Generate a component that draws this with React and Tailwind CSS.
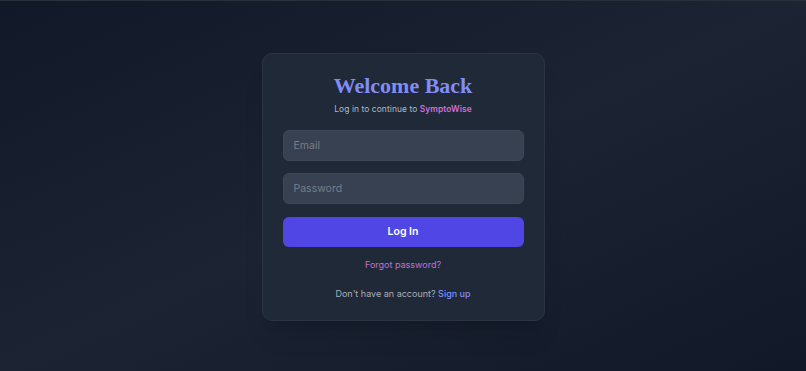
export default function App() {
  return (
    <div className="h-[371px] w-full bg-gradient-to-br from-[#111827] via-[#1c2434] to-[#111827] flex items-center justify-center border-t border-[#2a303a]" style={{ fontFamily: "Inter, 'Noto Sans', sans-serif" }}>
      <div className="w-[283px] h-[268px] mt-[2px] rounded-[10px] bg-[#1f2937] border border-[#2a3442] shadow-xl px-[20px] pt-[19px] flex flex-col">
        <h1 className="text-center text-[22px] leading-[26px] font-bold text-[#818cf8]" style={{ fontFamily: "'Liberation Serif', serif" }}>Welcome Back</h1>
        <p className="text-center text-[8.4px] leading-[14px] mt-[3px] text-[#b4bac4] tracking-[0.1px]">
          Log in to continue to <span className="font-semibold text-[#d16fdc]">SymptoWise</span>
        </p>
        <div className="mt-[14px] h-[31px] rounded-[6px] bg-[#374151] border border-[#3d4757] flex items-center px-[10px] text-[10.5px] text-[#767e8c]">Email</div>
        <div className="mt-[12px] h-[31px] rounded-[6px] bg-[#374151] border border-[#3d4757] flex items-center px-[10px] text-[10.5px] text-[#767e8c]">Password</div>
        <button className="mt-[13px] h-[30px] rounded-[6px] bg-[#4f46e5] text-white text-[10.5px] font-semibold">Log In</button>
        <div className="mt-[12px] text-center text-[9px] leading-[12px] text-[#c46fcf]">Forgot password?</div>
        <div className="mt-[17px] text-center text-[9px] leading-[12px] text-[#aab0bb]">
          Don't have an account? <span className="font-medium text-[#818cf8]">Sign up</span>
        </div>
      </div>
    </div>
  );
}
